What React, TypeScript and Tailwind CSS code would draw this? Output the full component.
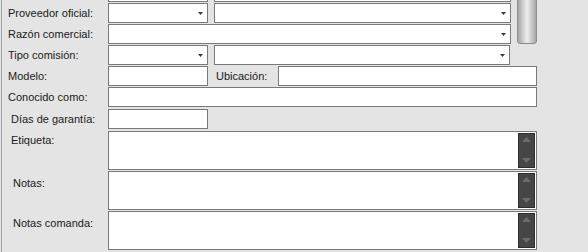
import React from 'react';

// small combo arrow
const ComboArrow = () => (
  <svg width="5" height="3" viewBox="0 0 5 3" className="mt-px">
    <path d="M0 0h5L2.5 3z" fill="#3a3a3a" />
  </svg>
);

const Field = ({ width, combo }: { width: string; combo?: boolean }) => (
  <div className={`${width} h-[20px] shrink-0 border border-[#7a7a7a] bg-white flex items-center justify-end pr-[4px]`}>
    {combo && <ComboArrow />}
  </div>
);

const Row = ({ label, pad = 'pl-[6px]', children }: { label: string; pad?: string; children?: React.ReactNode }) => (
  <div className="flex h-[20px] items-center">
    <div className={`w-[106px] shrink-0 ${pad} whitespace-nowrap`}>{label}</div>
    {children}
  </div>
);

// multiline box with the dark spin-style scroller on the right
const Memo = ({ label, pad, top }: { label: string; pad: string; top: string }) => (
  <div className="flex items-start">
    <div className={`w-[106px] shrink-0 ${pad} ${top} whitespace-nowrap`}>{label}</div>
    <div className="h-[39px] w-[429px] border border-[#7a7a7a] bg-white p-px flex justify-end">
      <div className="w-[17px] h-full bg-[#464646] border border-[#2e2e2e] flex flex-col items-center justify-between pt-[3px] pb-[4px]">
        <svg width="9" height="5" viewBox="0 0 9 5">
          <path d="M4.5 0L9 5H0z" fill="#6a6a6a" />
        </svg>
        <svg width="9" height="5" viewBox="0 0 9 5">
          <path d="M0 0h9L4.5 5z" fill="#6a6a6a" />
        </svg>
      </div>
    </div>
  </div>
);

const App = () => {
  return (
    <div className="w-[588px] h-[252px] overflow-hidden bg-[#e4e4e4] pl-px font-['Liberation_Sans',Arial,sans-serif] text-[11px] leading-[13px] text-[#1a1a1a]">
      <div className="h-full border-l border-[#a3a3a3] overflow-hidden">
        {/* panel is scrolled down a bit, previous row only shows its bottom edge */}
        <div className="-mt-[18px] flex flex-col">
          <div className="flex items-start">
            <div className="flex flex-col gap-px">
              <Row label="">
                <Field width="w-[100px]" combo />
                <div className="ml-[6px]">
                  <Field width="w-[297px]" combo />
                </div>
              </Row>
              <Row label="Proveedor oficial:">
                <Field width="w-[100px]" combo />
                <div className="ml-[6px]">
                  <Field width="w-[297px]" combo />
                </div>
              </Row>
              <Row label="Razón comercial:">
                <Field width="w-[403px]" combo />
              </Row>
            </div>
            <div className="ml-[6px] w-[20px] h-[62px] border border-[#8c8c8c] rounded-b-[3px] bg-linear-to-r from-[#a6a6a6] via-[#eeeeee] to-[#a6a6a6]" />
          </div>

          <div className="mt-px flex flex-col gap-px">
            <Row label="Tipo comisión:">
              <Field width="w-[100px]" combo />
              <div className="ml-[6px]">
                <Field width="w-[296px]" combo />
              </div>
            </Row>
            <Row label="Modelo:">
              <Field width="w-[100px]" />
              <div className="w-[70px] shrink-0 pl-[8px] whitespace-nowrap">Ubicación:</div>
              <Field width="w-[259px]" />
            </Row>
            <Row label="Conocido como:">
              <Field width="w-[429px]" />
            </Row>
          </div>

          <div className="mt-[2px]">
            <Row label="Días de garantía:" pad="pl-[9px]">
              <Field width="w-[100px]" />
            </Row>
          </div>

          <div className="mt-[2px] flex flex-col gap-px">
            <Memo label="Etiqueta:" pad="pl-[9px]" top="pt-[3px]" />
            <Memo label="Notas:" pad="pl-[11px]" top="pt-[6px]" />
            <Memo label="Notas comanda:" pad="pl-[11px]" top="pt-[6px]" />
          </div>
        </div>
      </div>
    </div>
  );
};

export default App;
